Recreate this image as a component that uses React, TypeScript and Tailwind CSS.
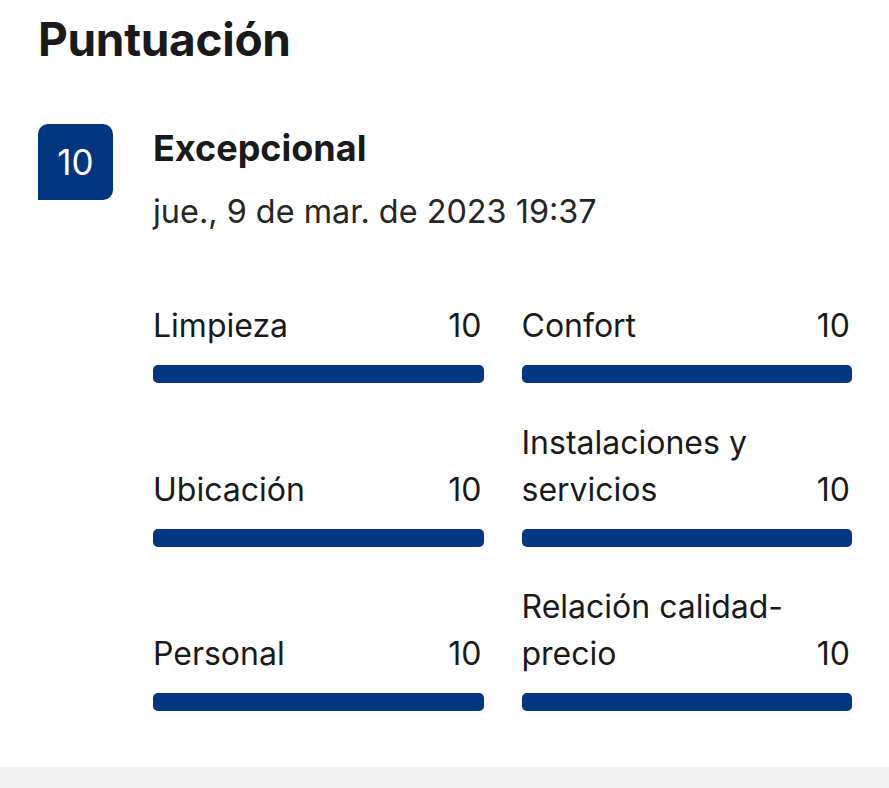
import React from "react";

const scores = [
  { label: "Limpieza", value: 10 },
  { label: "Confort", value: 10 },
  { label: "Ubicación", value: 10 },
  { label: "Instalaciones y servicios", value: 10 },
  { label: "Personal", value: 10 },
  { label: "Relación calidad-precio", value: 10 },
];

function ScoreRow({ label, value }: { label: string; value: number }) {
  return (
    <div className="flex flex-col justify-end">
      <div className="flex items-end justify-between gap-4 text-[32px] leading-[47px] text-[#1a1a1a]">
        <span className="max-w-[270px]">{label}</span>
        <span className="pr-[2px]">{value}</span>
      </div>
      <div className="mt-[16px] h-[18px] w-full rounded-[5px] bg-[#e6e6e6]">
        <div
          className="h-full rounded-[5px] bg-[#023680]"
          style={{ width: `${(value / 10) * 100}%` }}
        />
      </div>
    </div>
  );
}

export default function App() {
  return (
    <div className="flex h-[788px] w-[889px] flex-col bg-white font-['Inter',sans-serif] antialiased">
      <div className="flex-1 pl-[38px] pr-[37px] pt-[11px]">
        <h1 className="text-[46px] font-bold leading-[56px] tracking-[-0.3px] text-[#1a1a1a]">
          Puntuación
        </h1>
        <div className="mt-[57px] flex">
          <div className="flex h-[76px] w-[75px] shrink-0 items-center justify-center rounded-t-[10px] rounded-br-[10px] bg-[#003580] text-[35px] text-white">
            10
          </div>
          <div className="ml-[40px] flex-1">
            <p className="mt-[4px] text-[36px] font-bold leading-[40px] text-[#1a1a1a]">
              Excepcional
            </p>
            <p className="mt-[24px] text-[32.4px] leading-[40px] text-[#262626]">
              jue., 9 de mar. de 2023 19:37
            </p>
            <div className="mt-[70px] grid grid-cols-2 gap-x-[38px] gap-y-[36px]">
              {scores.map((s) => (
                <ScoreRow key={s.label} label={s.label} value={s.value} />
              ))}
            </div>
          </div>
        </div>
      </div>
      <div className="h-[21px] bg-[#f2f2f2]" />
    </div>
  );
}
